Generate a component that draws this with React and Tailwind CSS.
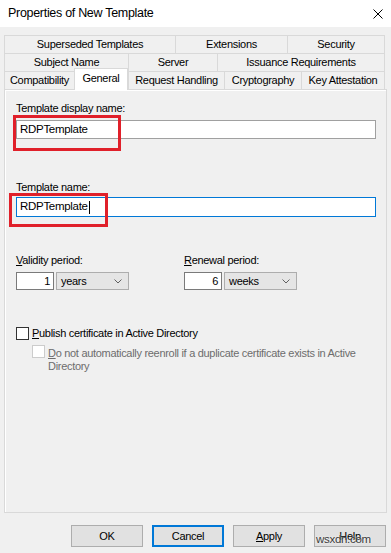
import React from "react";

const Tab = ({ label, w, last }) => (
  <div
    className={`h-full ${w} shrink-0 flex items-center justify-center border-t border-l border-[#d9d9d9] bg-[#f0f0f0] ${
      last ? "border-r" : ""
    }`}
  >
    {label}
  </div>
);

const Dropdown = ({ value }) => (
  <div className="w-[73px] h-[18px] bg-[#e5e5e5] border border-[#adadad] flex items-center justify-between pl-[4px] pr-[6px]">
    <span>{value}</span>
    <svg width="8" height="5" viewBox="0 0 8 5">
      <path d="M0.5 0.5 L4 4 L7.5 0.5" fill="none" stroke="#606060" strokeWidth="1" />
    </svg>
  </div>
);

const Period = ({ label, rest, num, unit }) => (
  <div className="w-[168px] shrink-0">
    <div className="leading-[13px]">
      <u className="underline-offset-[1px]">{label}</u>
      {rest}
    </div>
    <div className="mt-[5px] flex gap-[2px]">
      <div className="w-[38px] h-[18px] bg-white border border-[#7a7a7a] flex items-center justify-end pr-[3px]">
        {num}
      </div>
      <Dropdown value={unit} />
    </div>
  </div>
);

const Button = ({ children, focused }) => (
  <div
    className={`w-[72px] h-[22px] flex items-center justify-center bg-[#e1e1e1] ${
      focused ? "border-2 border-[#0078d7]" : "border border-[#adadad]"
    }`}
  >
    {children}
  </div>
);

export default function App() {
  return (
    <div className="w-[391px] h-[553px] bg-[#f0f0f0] relative overflow-hidden flex flex-col text-black text-[11px] tracking-[-0.3px] font-['Liberation_Sans',Arial,sans-serif]">
      {/* title bar */}
      <div className="h-[27px] shrink-0 bg-white flex items-center justify-between pl-[8px] pr-[8px]">
        <span className="text-[12.5px]">Properties of New Template</span>
        <svg width="10" height="10" viewBox="0 0 10 10">
          <path d="M0.5 0.5 L9.5 9.5 M9.5 0.5 L0.5 9.5" stroke="#000" strokeWidth="1" />
        </svg>
      </div>

      <div className="mt-[8px] mx-[4px] flex flex-col">
        {/* tabs */}
        <div className="flex h-[18px]">
          <Tab label="Superseded Templates" w="w-[171px]" />
          <Tab label="Extensions" w="w-[112px]" />
          <Tab label="Security" w="w-[98px]" last />
        </div>
        <div className="flex h-[18px]">
          <Tab label="Subject Name" w="w-[124px]" />
          <Tab label="Server" w="w-[89px]" />
          <Tab label="Issuance Requirements" w="w-[168px]" last />
        </div>
        <div className="flex h-[18px] items-end">
          <Tab label="Compatibility" w="w-[70px]" />
          <div className="w-[54px] h-[22px] -mb-px shrink-0 relative z-10 flex items-center justify-center border-t border-x border-[#d9d9d9] bg-white pb-[2px]">
            General
          </div>
          <Tab label="Request Handling" w="w-[96px]" />
          <Tab label="Cryptography" w="w-[77px]" />
          <Tab label="Key Attestation" w="w-[84px]" last />
        </div>

        {/* page */}
        <div className="h-[424px] border border-[#d9d9d9] bg-[#f0f0f0] relative pl-[11px] pr-[10px] shadow-[inset_1px_1px_0_#ffffff]">
          <div className="mt-[12px] leading-[13px]">Template display name:</div>
          <div className="mt-[5px] h-[19px] bg-white border border-[#a0a0a0] flex items-center pl-[3px] text-[11.5px]">
            RDPTemplate
          </div>

          <div className="mt-[42px] leading-[13px]">Template name:</div>
          <div className="mt-[3px] h-[20px] bg-white border border-[#0078d7] flex items-center pl-[3px] text-[11.5px]">
            RDPTemplate
            <span className="ml-px w-px h-[13px] bg-black" />
          </div>

          <div className="mt-[37px] flex">
            <Period label="V" rest="alidity period:" num="1" unit="years" />
            <Period label="R" rest="enewal period:" num="6" unit="weeks" />
          </div>

          <div className="mt-[37px] flex items-center">
            <div className="w-[13px] h-[13px] bg-white border border-[#333333] shrink-0" />
            <span className="ml-[3px] leading-[13px]">
              <u className="underline-offset-[1px]">P</u>ublish certificate in Active Directory
            </span>
          </div>
          <div className="mt-[5px] pl-[16px] flex items-start">
            <div className="w-[13px] h-[13px] bg-white border border-[#cccccc] shrink-0" />
            <span className="ml-[3px] mt-[2px] leading-[13px] text-[#6d6d6d] w-[328px]">
              <u className="underline-offset-[1px]">D</u>o not automatically reenroll if a duplicate certificate exists in Active Directory
            </span>
          </div>

          {/* annotation boxes */}
          <div className="absolute left-[8px] top-[25px] w-[108px] h-[36px] border-[3px] border-[#e0202a]" />
          <div className="absolute left-[4px] top-[103px] w-[99px] h-[34px] border-[3px] border-[#e0202a]" />
        </div>
      </div>

      {/* buttons */}
      <div className="mt-[12px] flex justify-end gap-[9px] pr-[5px]">
        <Button>OK</Button>
        <Button focused>Cancel</Button>
        <Button>
          <span>
            <u className="underline-offset-[1px]">A</u>pply
          </span>
        </Button>
        <Button>Help</Button>
      </div>

      {/* watermark */}
      <div className="absolute left-[316px] top-[533px] text-[11.5px] text-[#3a3a3a] leading-[13px] [text-shadow:0_0_2px_#ffffff]">
        wsxdn.com
      </div>
    </div>
  );
}
